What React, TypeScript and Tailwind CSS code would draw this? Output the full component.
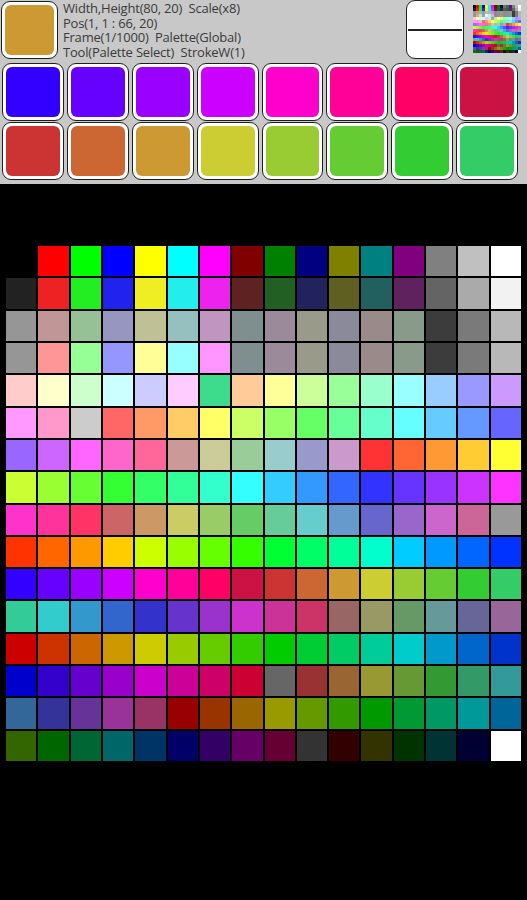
import React from "react";

const P: string[] = [
  "000000","ff0000","00ff00","0000ff","ffff00","00ffff","ff00ff","800000","008000","000080","808000","008080","800080","808080","c0c0c0","ffffff",
  "222222","ee2222","22ee22","2222ee","eeee22","22eeee","ee22ee","5f2222","225f22","22225f","5f5f22","225f5f","5f225f","646464","aaaaaa","f2f2f2",
  "969696","c09696","96c096","9696c0","c0c096","96c0c0","c096c0","7f8f8f","9a8a9a","9a9a8a","8a8a9a","9a8a8a","8a9a8a","3c3c3c","7a7a7a","b8b8b8",
  "969696","ff9696","96ff96","9696ff","ffff96","96ffff","ff96ff","7f8f8f","9a8a9a","9a9a8a","8a8a9a","9a8a8a","8a9a8a","3c3c3c","7a7a7a","b8b8b8",
  "ffcccc","ffffcc","ccffcc","ccffff","ccccff","ffccff","3ddc8c","ffcc99","ffff99","ccff99","99ff99","99ffcc","99ffff","99ccff","9999ff","cc99ff",
  "ff99ff","ff99cc","cccccc","ff6666","ff9966","ffcc66","ffff66","ccff66","99ff66","66ff66","66ff99","66ffcc","66ffff","66ccff","6699ff","6666ff",
  "9966ff","cc66ff","ff66ff","ff66cc","ff6699","cc9999","cccc99","99cc99","99cccc","9999cc","cc99cc","ff3333","ff6633","ff9933","ffcc33","ffff33",
  "ccff33","99ff33","66ff33","33ff33","33ff66","33ff99","33ffcc","33ffff","33ccff","3399ff","3366ff","3333ff","6633ff","9933ff","cc33ff","ff33ff",
  "ff33cc","ff3399","ff3366","cc6666","cc9966","cccc66","99cc66","66cc66","66cc99","66cccc","6699cc","6666cc","9966cc","cc66cc","cc6699","999999",
  "ff3300","ff6600","ff9900","ffcc00","ccff00","99ff00","66ff00","33ff00","00ff33","00ff66","00ff99","00ffcc","00ccff","0099ff","0066ff","0033ff",
  "3300ff","6600ff","9900ff","cc00ff","ff00cc","ff0099","ff0066","cc1144","cc3333","cc6633","cc9933","cccc33","99cc33","66cc33","33cc33","33cc66",
  "33cc99","33cccc","3399cc","3366cc","3333cc","6633cc","9933cc","cc33cc","cc3399","cc3366","996666","999966","669966","669999","666699","996699",
  "cc0000","cc3300","cc6600","cc9900","cccc00","99cc00","66cc00","33cc00","00cc00","00cc33","00cc66","00cc99","00cccc","0099cc","0066cc","0033cc",
  "0000cc","3300cc","6600cc","9900cc","cc00cc","cc0099","cc0066","cc0033","666666","993333","996633","999933","669933","339933","339966","339999",
  "336699","333399","663399","993399","993366","990000","993300","996600","999900","669900","339900","009900","009933","009966","009999","006699",
  "336600","006600","006633","006666","003366","000066","330066","660066","660033","333333","330000","333300","003300","003333","000033","ffffff",
];

function Swatch({ color }: { color: string }) {
  return (
    <div className="h-full w-full rounded-[9px] border border-[#1e1e1e] bg-white p-[3px]">
      <div className="h-full w-full rounded-[6px]" style={{ backgroundColor: "#" + color }} />
    </div>
  );
}

export default function App() {
  const row1 = P.slice(160, 168);
  const row2 = P.slice(168, 176);
  return (
    <div className="h-[900px] w-[527px] overflow-hidden bg-black" style={{ fontFamily: '"Open Sans", "Noto Sans", sans-serif' }}>
      <div className="h-[184px] bg-[#c8c8c8]">
        <div className="flex h-[62px]">
          <div className="ml-[1px] mt-[1px] h-[58px] w-[57px]">
            <Swatch color="cc9933" />
          </div>
          <div className="ml-[5px] mt-[1px] flex flex-col text-[13px] leading-[14.7px] tracking-[-0.2px] text-[#3a3a3a] whitespace-pre">
            <span>Width,Height(80, 20)  Scale(x8)</span>
            <span>Pos(1, 1 : 66, 20)</span>
            <span>Frame(1/1000)  Palette(Global)</span>
            <span>Tool(Palette Select)  StrokeW(1)</span>
          </div>
          <div className="ml-auto mt-0 flex h-[59px] w-[58px] items-center rounded-[9px] border-[1.5px] border-[#222] bg-white px-[1px]">
            <div className="h-[2px] w-full bg-[#222]" />
          </div>
          <div className="ml-[9px] mr-[6px] mt-[5px] h-[48px] w-[48px]">
            <svg width="48" height="48" viewBox="0 0 48 48" shapeRendering="crispEdges">
              {P.map((c, i) => (
                <rect key={i} x={(i % 16) * 3} y={Math.floor(i / 16) * 3} width="3" height="3" fill={"#" + c} />
              ))}
            </svg>
          </div>
        </div>
        <div className="ml-[2px] mt-[1px] grid w-[516px] grid-cols-8 gap-x-[3px] gap-y-[1px]">
          {row1.map((c, i) => (
            <div key={"a" + i} className="h-[58px]">
              <Swatch color={c} />
            </div>
          ))}
          {row2.map((c, i) => (
            <div key={"b" + i} className="h-[58px]">
              <Swatch color={c} />
            </div>
          ))}
        </div>
      </div>
      <div className="ml-[6px] mt-[62px] grid h-[515px] w-[515px] grid-cols-16 grid-rows-16 gap-[2px]">
        {P.map((c, i) => (
          <div key={i} style={{ backgroundColor: "#" + c }} />
        ))}
      </div>
    </div>
  );
}
